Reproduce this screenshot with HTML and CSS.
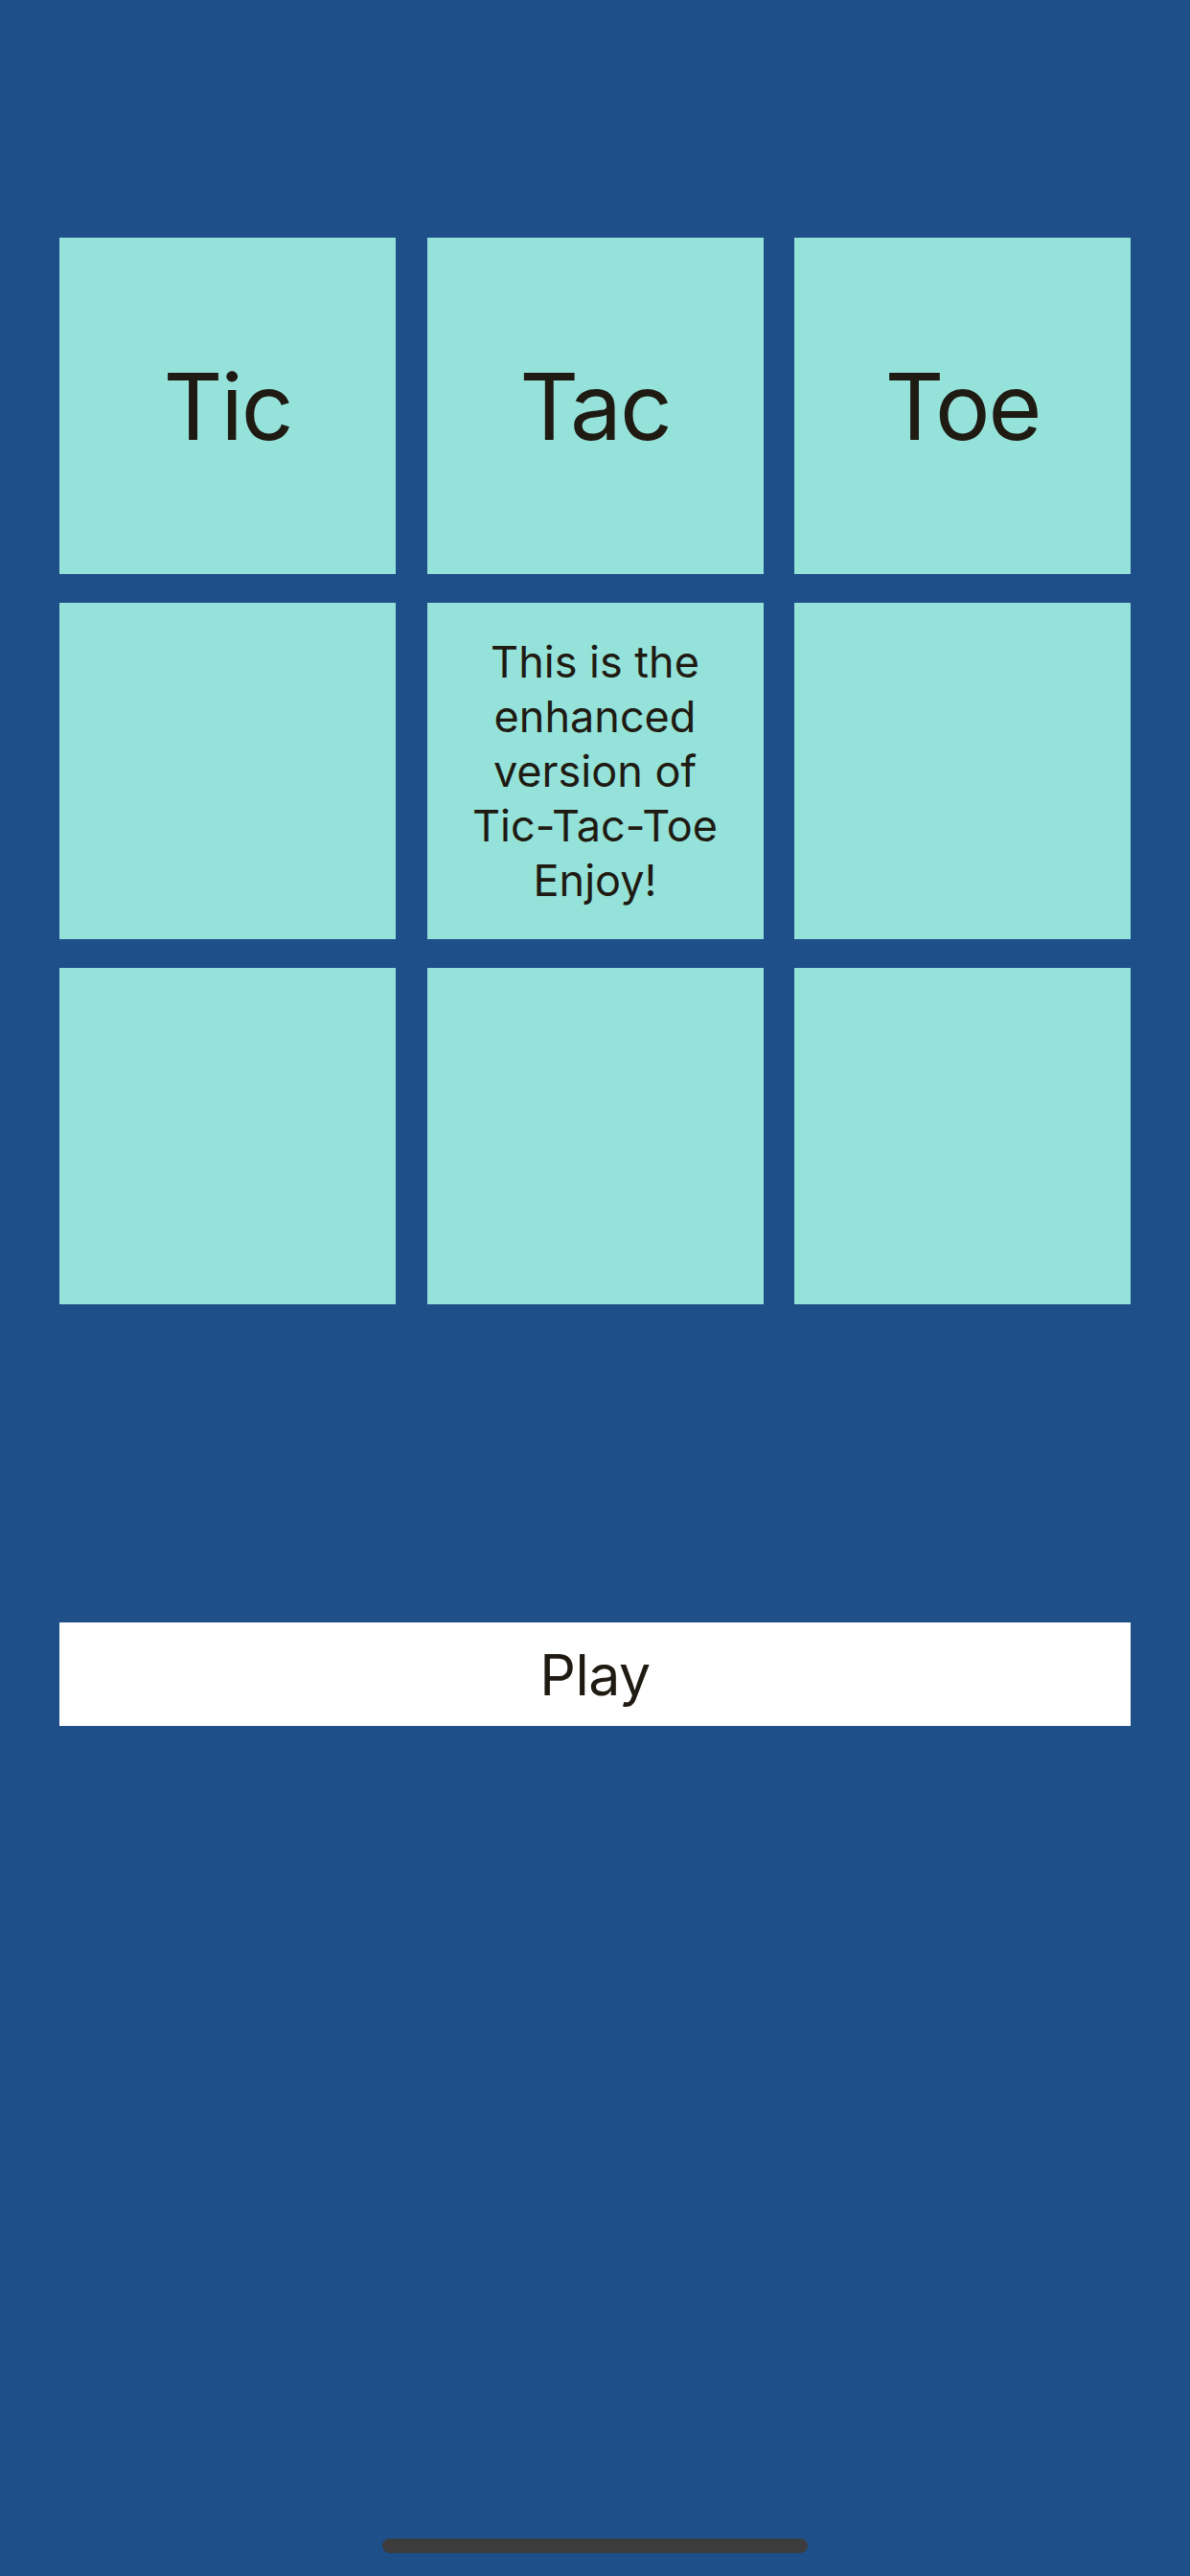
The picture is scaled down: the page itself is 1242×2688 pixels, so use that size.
FILE: index.html
```html
<!DOCTYPE html>
<html lang="en">
<head>
<meta charset="utf-8">
<title>Tic Tac Toe</title>
<link rel="stylesheet" href="styles.css">
</head>
<body>
<div class="screen">
  <div class="board">
    <div class="cell big">Tic</div>
    <div class="cell big">Tac</div>
    <div class="cell big">Toe</div>
    <div class="cell"></div>
    <div class="cell small">This is the enhanced version of Tic-Tac-Toe Enjoy!</div>
    <div class="cell"></div>
    <div class="cell"></div>
    <div class="cell"></div>
    <div class="cell"></div>
  </div>
  <button class="play">Play</button>
  <div class="home-indicator"></div>
</div>
</body>
</html>
```

FILE: styles.css
```css
html, body {
  margin: 0;
  padding: 0;
  background: #1e4f89;
}

.screen {
  box-sizing: border-box;
  width: 1242px;
  min-height: 2688px;
  padding: 248px 62px 0 62px;
  display: flex;
  flex-direction: column;
  font-family: Inter, "Noto Sans", sans-serif;
  color: #1f1a12;
}

.board {
  display: grid;
  grid-template-columns: repeat(3, 351px);
  grid-template-rows: repeat(3, 351px);
  column-gap: 32.5px;
  row-gap: 30px;
}

.cell {
  background: #94e2d9;
  display: flex;
  align-items: center;
  justify-content: center;
  text-align: center;
}

.cell.big {
  font-size: 96px;
  line-height: 1;
  letter-spacing: -2px;
}

.cell.small {
  font-size: 45px;
  line-height: 57px;
  padding: 0 36px;
  box-sizing: border-box;
}

.play {
  margin-top: 332px;
  height: 108px;
  width: 1118px;
  border: none;
  background: #ffffff;
  font-family: Inter, "Noto Sans", sans-serif;
  font-size: 59px;
  letter-spacing: -0.5px;
  color: #1f1a12;
  padding: 0;
}

.home-indicator {
  margin: auto auto 24px auto;
  width: 444px;
  height: 15px;
  border-radius: 8px;
  background: #3c3c3c;
}
```
